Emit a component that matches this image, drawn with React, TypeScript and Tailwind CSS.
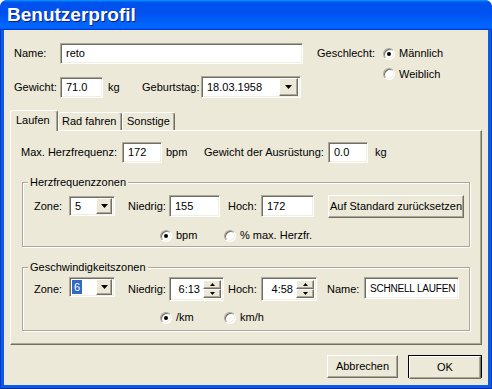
import React from 'react';

// classic 3D edges on the XP beige scheme
const sunken =
  'bg-white border border-t-[#aca899] border-l-[#aca899] border-b-white border-r-white shadow-[inset_1px_1px_0_#716f64,inset_-1px_-1px_0_#f1efe2]';
const raised =
  'bg-[#ece9d8] border border-t-white border-l-white border-b-[#716f64] border-r-[#716f64] shadow-[inset_-1px_-1px_0_#aca899]';

const DownArrow = ({ small = false }: { small?: boolean }) =>
  small ? (
    <svg width="5" height="3" viewBox="0 0 5 3">
      <path d="M0 0h5L2.5 3z" fill="#000" />
    </svg>
  ) : (
    <svg width="7" height="4" viewBox="0 0 7 4">
      <path d="M0 0h7L3.5 4z" fill="#000" />
    </svg>
  );

const UpArrow = () => (
  <svg width="5" height="3" viewBox="0 0 5 3">
    <path d="M0 3h5L2.5 0z" fill="#000" />
  </svg>
);

const Field = ({ className = '', children }: { className?: string; children?: React.ReactNode }) => (
  <div className={`${sunken} flex items-center pl-[5px] ${className}`}>{children}</div>
);

const Combo = ({
  className = '',
  btn = 'w-[16px] h-[16px]',
  children,
}: {
  className?: string;
  btn?: string;
  children?: React.ReactNode;
}) => (
  <div className={`${sunken} flex items-center justify-between pl-[5px] pr-[2px] ${className}`}>
    <span className="flex items-center">{children}</span>
    <div className={`${raised} ${btn} flex items-center justify-center`}>
      <DownArrow />
    </div>
  </div>
);

const Spin = ({ value, className = '' }: { value: string; className?: string }) => (
  <div className={`${sunken} flex items-stretch p-[2px] ${className}`}>
    <span className="flex-1 flex items-center justify-end pr-[3px]">{value}</span>
    <div className="flex flex-col w-[18px]">
      <div className={`${raised} flex-1 flex items-center justify-center`}>
        <UpArrow />
      </div>
      <div className={`${raised} flex-1 flex items-center justify-center`}>
        <DownArrow small />
      </div>
    </div>
  </div>
);

const Radio = ({ checked = false, label, className = '' }: { checked?: boolean; label: string; className?: string }) => (
  <div className={`flex items-center gap-[4px] ${className}`}>
    <span className="w-[12px] h-[12px] rounded-full bg-white border border-t-[#aca899] border-l-[#aca899] border-b-white border-r-white shadow-[inset_1px_1px_0_#716f64,inset_-1px_-1px_0_#f1efe2] flex items-center justify-center">
      {checked && <span className="w-[4px] h-[4px] rounded-full bg-black" />}
    </span>
    <span>{label}</span>
  </div>
);

const Group = ({ title, className = '', children }: { title: string; className?: string; children: React.ReactNode }) => (
  <div className={`relative mx-[11px] border border-[#aca899] shadow-[inset_1px_1px_0_#fff,1px_1px_0_#fff] ${className}`}>
    {/* caption sits on top of the etched frame */}
    <span className="absolute -top-[7px] left-[5px] px-[2px] bg-[#ece9d8] leading-[13px]">{title}</span>
    {children}
  </div>
);

const Button = ({ className = '', children }: { className?: string; children: React.ReactNode }) => (
  <div className={`${raised} h-[23px] flex items-center justify-center ${className}`}>{children}</div>
);

export default function App() {
  return (
    <div className="w-[492px] h-[389px] flex flex-col rounded-t-[7px] overflow-hidden bg-[#0b5ae8] text-[11px] leading-[13px] text-black [font-family:'Liberation_Sans',Arial,sans-serif]">
      {/* Title bar */}
      <div className="h-[30px] shrink-0 flex items-center pl-[7px] bg-[linear-gradient(180deg,#0997ff,#0053ee_8%,#0050ee_40%,#0066ff_88%,#0066ff_93%,#005bff_95%,#003dd7_96%,#003dd7)]">
        <span className="text-white font-bold text-[19px] leading-[22px] [text-shadow:1px_1px_0_#0a1e7a]">
          Benutzerprofil
        </span>
      </div>

      {/* Window frame */}
      <div className="flex-1 flex px-[4px] pb-[4px] shadow-[inset_1px_0_0_#0a3bbf,inset_-1px_0_0_#0a3bbf,inset_0_-1px_0_#04279a]">
        <div className="flex-1 flex flex-col bg-[#ece9d8] pt-[13px] px-[6px]">
          {/* Top fields */}
          <div className="flex pl-[4px]">
            <div className="w-[292px] flex flex-col gap-[12px]">
              <div className="flex items-center h-[21px]">
                <span className="w-[46px]">Name:</span>
                <Field className="w-[243px] h-[21px]">reto</Field>
              </div>
              <div className="flex items-center h-[22px]">
                <span className="w-[46px]">Gewicht:</span>
                <Field className="w-[43px] h-[21px]">71.0</Field>
                <span className="ml-[5px] w-[34px]">kg</span>
                <span className="w-[59px]">Geburtstag:</span>
                <Combo className="w-[100px] h-[22px]" btn="w-[19px] h-[18px]">
                  18.03.1958
                </Combo>
              </div>
            </div>
            <div className="ml-[11px] flex">
              <span className="w-[66px] h-[21px] flex items-center">Geschlecht:</span>
              <div className="flex flex-col">
                <Radio checked label="Männlich" className="h-[21px]" />
                <Radio label="Weiblich" className="h-[20px]" />
              </div>
            </div>
          </div>

          {/* Tabs */}
          <div className="mt-[12px] h-[20px] flex items-end">
            <div className="relative z-10 -mb-px h-[21px] w-[48px] pl-[5px] pt-[3px] bg-[#ece9d8] border border-b-0 border-t-white border-l-white border-r-[#716f64] rounded-t-[3px] shadow-[inset_-1px_0_0_#aca899]">
              Laufen
            </div>
            <div className="h-[18px] w-[64px] pl-[3px] pt-[2px] border border-b-0 border-t-white border-l-white border-r-[#716f64] rounded-t-[3px] shadow-[inset_-1px_0_0_#aca899]">
              Rad fahren
            </div>
            <div className="h-[18px] w-[53px] pl-[4px] pt-[2px] border border-b-0 border-t-white border-l-white border-r-[#716f64] rounded-t-[3px] shadow-[inset_-1px_0_0_#aca899]">
              Sonstige
            </div>
          </div>

          {/* Tab panel */}
          <div className="h-[215px] flex flex-col pt-[11px] border border-t-white border-l-white border-b-[#716f64] border-r-[#716f64] shadow-[inset_-1px_-1px_0_#aca899]">
            <div className="flex items-center h-[21px] pl-[10px]">
              <span className="w-[101px]">Max. Herzfrequenz:</span>
              <Field className="w-[40px] h-[21px]">172</Field>
              <span className="ml-[4px] w-[38px]">bpm</span>
              <span className="w-[124px]">Gewicht der Ausrüstung:</span>
              <Field className="w-[40px] h-[21px]">0.0</Field>
              <span className="ml-[7px]">kg</span>
            </div>

            <Group title="Herzfrequenzzonen" className="mt-[19px] pt-[12px] pb-[4px]">
              <div className="flex items-center h-[22px] pl-[11px]">
                <span className="w-[35px]">Zone:</span>
                <Combo className="w-[46px] h-[20px]">5</Combo>
                <span className="ml-[13px] w-[41px]">Niedrig:</span>
                <Field className="w-[51px] h-[22px]">155</Field>
                <span className="ml-[8px] w-[33px]">Hoch:</span>
                <Field className="w-[53px] h-[22px]">172</Field>
                <Button className="ml-[14px] w-[136px] h-[22px]">Auf Standard zurücksetzen</Button>
              </div>
              <div className="mt-[12px] h-[13px] flex pl-[137px]">
                <Radio checked label="bpm" className="w-[64px]" />
                <Radio label="% max. Herzfr." />
              </div>
            </Group>

            <Group title="Geschwindigkeitszonen" className="mt-[20px] pt-[9px] pb-[6px]">
              <div className="flex items-center h-[24px] pl-[11px]">
                <span className="w-[35px]">Zone:</span>
                <Combo className="w-[46px] h-[20px] self-start">
                  <span className="bg-[#316ac5] text-white px-[2px] -ml-[3px] leading-[14px]">6</span>
                </Combo>
                <span className="ml-[13px] w-[41px]">Niedrig:</span>
                <Spin value="6:13" className="w-[55px] h-[24px]" />
                <span className="ml-[4px] w-[33px]">Hoch:</span>
                <Spin value="4:58" className="w-[56px] h-[24px]" />
                <span className="ml-[10px] w-[37px]">Name:</span>
                <Field className="w-[95px] h-[22px] self-start text-[10px] tracking-[-0.2px]">SCHNELL LAUFEN</Field>
              </div>
              <div className="mt-[10px] h-[13px] flex pl-[137px]">
                <Radio checked label="/km" className="w-[64px]" />
                <Radio label="km/h" />
              </div>
            </Group>
          </div>

          {/* Dialog buttons */}
          <div className="mt-[10px] flex justify-end gap-[10px]">
            <Button className="w-[71px]">Abbrechen</Button>
            <div className="w-[74px] h-[23px] border border-black flex">
              <Button className="flex-1 h-[21px]">OK</Button>
            </div>
          </div>
        </div>
      </div>
    </div>
  );
}
